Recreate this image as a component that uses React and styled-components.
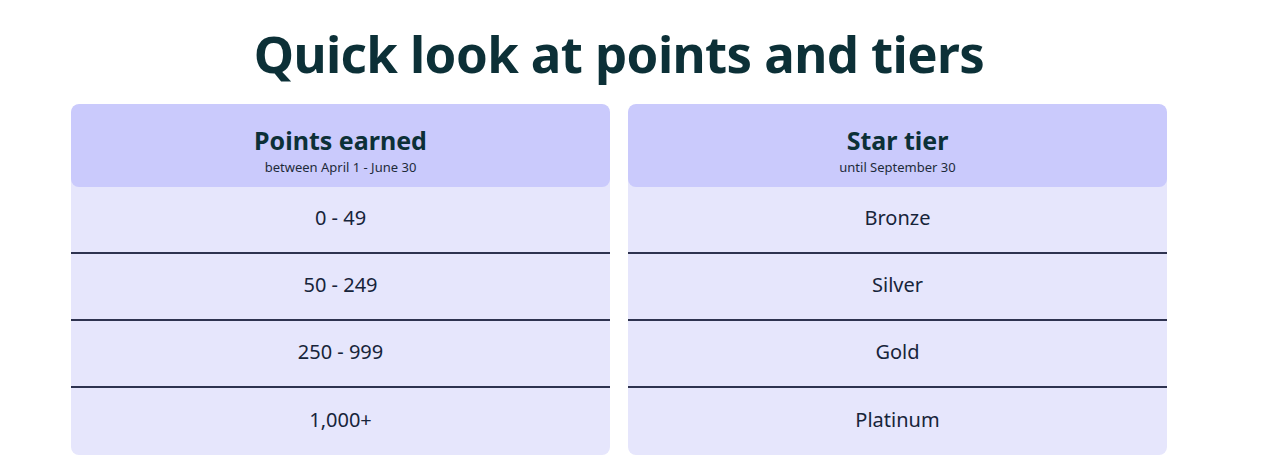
import React from "react";
import styled, { createGlobalStyle } from "styled-components";

const GlobalStyle = createGlobalStyle`
    body {
        margin: 0;
        background: #ffffff;
        font-family: "Noto Sans", "Liberation Sans", sans-serif;
        color: #0f2b33;
    }
`;

const tables = [
    {
        title: "Points earned",
        sub: "between April 1 - June 30",
        rows: ["0 - 49", "50 - 249", "250 - 999", "1,000+"],
    },
    {
        title: "Star tier",
        sub: "until September 30",
        rows: ["Bronze", "Silver", "Gold", "Platinum"],
    },
];

const App = () => {
    return (
        <Wrapper>
            <GlobalStyle />
            <Heading>Quick look at points and tiers</Heading>
            <Cards>
                {tables.map((t) => (
                    <Card key={t.title}>
                        <CardHead>
                            <h3>{t.title}</h3>
                            <p>{t.sub}</p>
                        </CardHead>
                        {t.rows.map((r, i) => (
                            <Row key={r} last={i === t.rows.length - 1}>
                                {r}
                            </Row>
                        ))}
                    </Card>
                ))}
            </Cards>
        </Wrapper>
    );
};

const Wrapper = styled.main`
    width: 1096px;
    margin-left: 71px;
    padding-top: 16px;
`;

const Heading = styled.h1`
    margin: 0 0 14px;
    text-align: center;
    font-size: 51px;
    line-height: 74px;
    font-weight: 700;
    color: #0c3037;
    letter-spacing: -0.6px;
`;

const Cards = styled.div`
    display: grid;
    grid-template-columns: 1fr 1fr;
    column-gap: 18px;
`;

const Card = styled.section`
    background: #e6e6fc;
    border-radius: 8px;
    overflow: hidden;
`;

const CardHead = styled.header`
    height: 83px;
    background: #cacafc;
    border-radius: 8px;
    display: flex;
    flex-direction: column;
    align-items: center;
    justify-content: center;
    padding-top: 8px;
    box-sizing: border-box;
    h3 {
        margin: 0;
        font-size: 25px;
        line-height: 30px;
        font-weight: 700;
        color: #0c3037;
    }
    p {
        margin: 4px 0 0;
        font-size: 13px;
        line-height: 16px;
        color: #1e2a3a;
    }
`;

const Row = styled.div`
    height: 67px;
    box-sizing: border-box;
    display: flex;
    align-items: center;
    justify-content: center;
    font-size: 20px;
    color: #17243a;
    border-bottom: ${(p) => (p.last ? "none" : "2px solid #2e3350")};
    padding-bottom: 4px;
`;

export default App;
